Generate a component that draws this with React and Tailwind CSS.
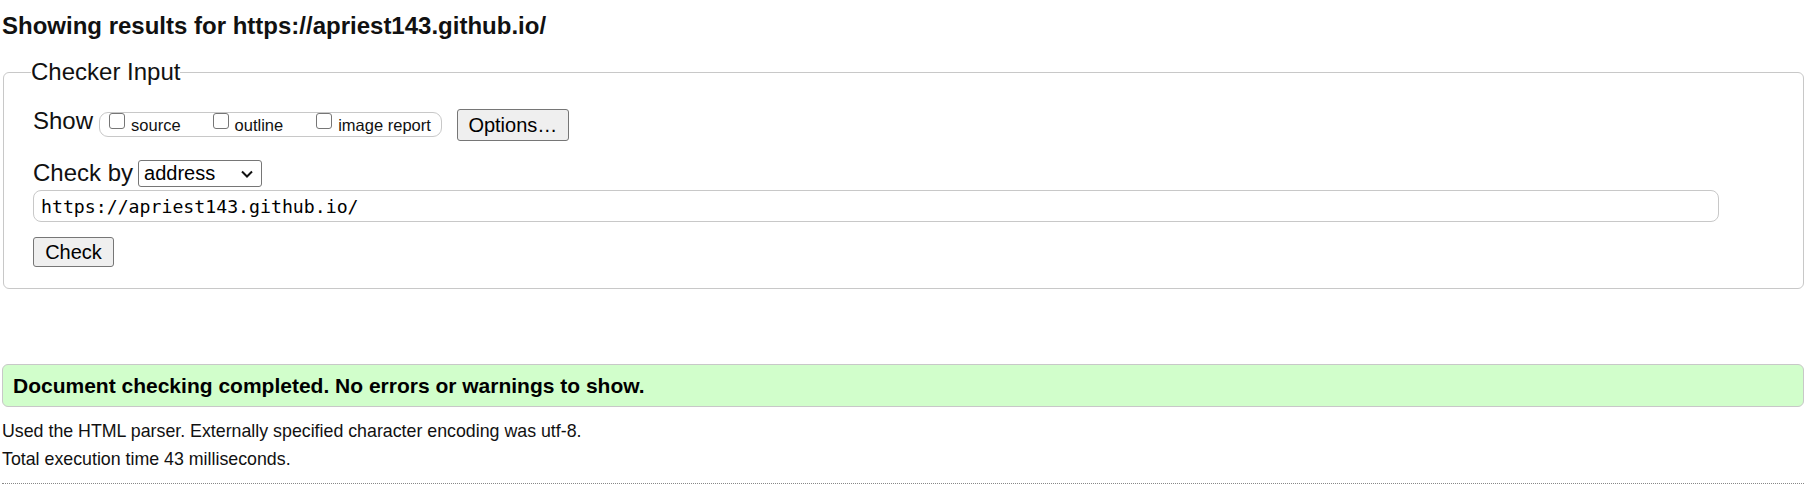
import React from "react";

function CheckOption({ label, gap }) {
  return (
    <label className={`flex items-start ${gap}`}>
      <input
        type="checkbox"
        className="appearance-none w-[16px] h-[16px] mt-0 border border-[#767676] rounded-[3px] bg-white"
      />
      <span className="ml-[6px] mt-[2px] text-[16.5px] leading-[20px]">{label}</span>
    </label>
  );
}

export default function App() {
  return (
    <div className="min-h-screen bg-white text-[#111] font-['Liberation_Sans',Arial,sans-serif] pt-[12px] pl-[2px]">
      {/* HEADING */}
      <h2 className="m-0 text-[24px] leading-[28px] font-bold">
        Showing results for https://apriest143.github.io/
      </h2>

      {/* CHECKER INPUT */}
      <fieldset className="mt-[18px] ml-[1px] w-[1801px] border border-[#c8c8c8] rounded-[6px] pl-[29px] pr-[30px] pt-[21px] pb-[21px]">
        <legend className="-ml-[2px] px-0 text-[24px] leading-[28px]">Checker Input</legend>

        {/* show row */}
        <div className="flex items-start">
          <span className="text-[24px] leading-[28px]">Show</span>
          <div className="ml-[6px] mt-[5px] h-[25px] flex items-start border border-[#c8c8c8] rounded-[9px] pl-[9px] pr-[10px]">
            <CheckOption label="source" gap="" />
            <CheckOption label="outline" gap="ml-[32px]" />
            <CheckOption label="image report" gap="ml-[33px]" />
          </div>
          <button className="ml-[15px] mt-[2px] w-[112px] h-[32px] bg-[#efefef] border border-[#767676] rounded-[3px] text-[20px] leading-[24px] text-black">
            Options…
          </button>
        </div>

        {/* check by row */}
        <div className="flex items-start mt-[19px]">
          <span className="-mt-[1px] text-[24px] leading-[28px]">Check by</span>
          <div className="relative ml-[5px] w-[124px] h-[27px]">
            <select className="appearance-none block w-full h-full border border-[#767676] rounded-[3px] bg-white pl-[5px] text-[20px] leading-[25px] text-black">
              <option>address</option>
              <option>file upload</option>
              <option>text input</option>
            </select>
            <svg
              className="absolute right-[9px] top-[10px] pointer-events-none"
              width="12"
              height="8"
              viewBox="0 0 12 8"
              fill="none"
            >
              <polyline points="1,1.5 6,6.5 11,1.5" stroke="#111" strokeWidth="2" />
            </svg>
          </div>
        </div>

        {/* url */}
        <input
          readOnly
          value="https://apriest143.github.io/"
          className="block mt-[3px] w-[1686px] h-[32px] border border-[#c8c8c8] rounded-[8px] pl-[7px] bg-white font-['DejaVu_Sans_Mono',monospace] text-[18.2px] text-black"
        />

        <button className="block mt-[15px] w-[81px] h-[30px] bg-[#efefef] border border-[#767676] rounded-[3px] text-[20px] leading-[24px] text-black">
          Check
        </button>
      </fieldset>

      {/* RESULT */}
      <div className="mt-[75px] w-[1802px] h-[43px] flex items-center bg-[#d1fecb] border border-[#c8c8c8] rounded-[6px] pl-[10px] text-[21px] font-bold text-black">
        Document checking completed. No errors or warnings to show.
      </div>

      <p className="mt-[14px] text-[17.8px] leading-[20px]">
        Used the HTML parser. Externally specified character encoding was utf-8.
      </p>
      <p className="mt-[8px] text-[17.8px] leading-[20px]">Total execution time 43 milliseconds.</p>

      <div className="mt-[14px] w-[1802px] border-t border-dotted border-[#888]" />
    </div>
  );
}
